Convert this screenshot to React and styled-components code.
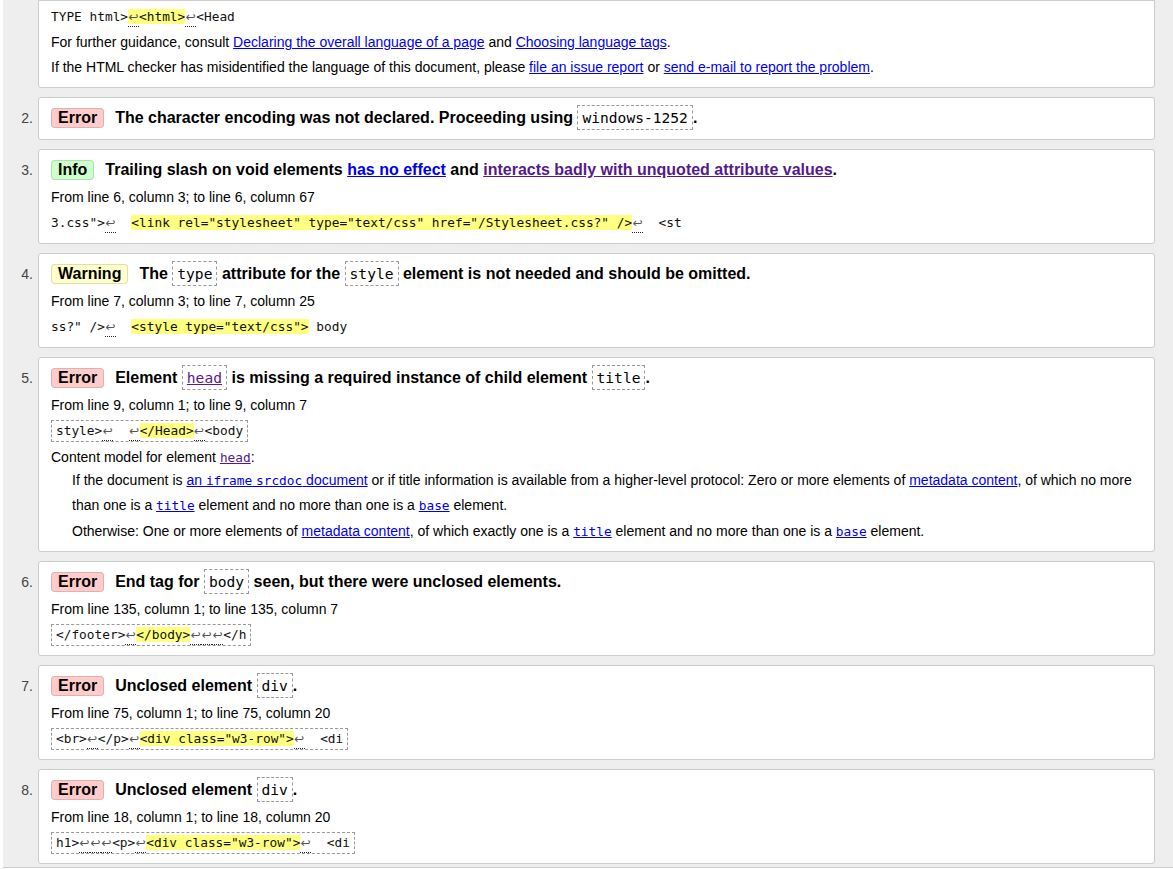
import React from 'react';
import styled, { createGlobalStyle, css } from 'styled-components';

const Global = createGlobalStyle`
  html, body { margin: 0; padding: 0; background: #fff; }
  body { font-family: "Liberation Sans", Arial, sans-serif; color: #000; }
  #root { min-height: 869px; }
`;

const Page = styled.main`
  margin-left: 3px;
  background: #eee;
  padding: 0 18px 3px 0;
  border-bottom: 1px solid #ccc;
`;

const List = styled.ol`
  list-style: none;
  margin: 0;
  padding: 0;
  display: flex;
  flex-direction: column;
  gap: 9px;
`;

const Item = styled.li`
  display: grid;
  grid-template-columns: 35px 1fr;
`;

const Marker = styled.span`
  text-align: right;
  padding: 9px 5px 0 0;
  font-size: 14px;
  line-height: 24px;
  color: #444;
`;

const Card = styled.div`
  background: #fff;
  border: 1px solid #ccc;
  border-radius: 3px;
  padding: 8px 12px ${(p) => (p.$tight ? '7px' : '9px')};
  min-width: 0;
  ${(p) =>
    p.$continued &&
    css`
      padding-top: 5px;
      border-top-left-radius: 0;
      border-top-right-radius: 0;
    `}
`;

const Headline = styled.p`
  margin: 0;
  font-size: 16px;
  font-weight: bold;
  line-height: 24px;
`;

const badgeColors = {
  error: '#ffcccc',
  info: '#ccffcc',
  warning: '#ffffcc',
};

const Badge = styled.span`
  display: inline-block;
  padding: 0 6px;
  margin-right: 11px;
  border: 1px solid rgba(0, 0, 0, 0.13);
  border-radius: 4px;
  line-height: 18px;
  background: ${(p) => badgeColors[p.$kind]};
`;

const Code = styled.code`
  font-family: "DejaVu Sans Mono", "Liberation Mono", monospace;
  font-weight: normal;
  font-size: 14.6px;
  line-height: 1;
  border: 1px dashed #999;
  padding: 3px 4px;
`;

const Mono = styled.code`
  font-family: "DejaVu Sans Mono", "Liberation Mono", monospace;
  font-size: 12.8px;
  line-height: 1;
`;

const Link = styled.a`
  color: ${(p) => (p.$visited ? '#551a8b' : '#0000ee')};
  text-decoration: underline;
`;

const Detail = styled.p`
  margin: ${(p) => (p.$gap ?? 4)}px 0 0;
  font-size: 14px;
  line-height: ${(p) => p.$lh ?? 22}px;
`;

const Extract = styled.p`
  margin: ${(p) => (p.$first ? 0 : 4)}px 0 0;
  font-family: "DejaVu Sans Mono", "Liberation Mono", monospace;
  font-size: 12.8px;
  line-height: 22px;
  white-space: pre;
  color: #111;
  ${(p) =>
    p.$boxed &&
    css`
      width: fit-content;
      line-height: 20px;
      border: 1px dashed #999;
      padding: 0 4px;
    `}
`;

const Mark = styled.mark`
  background: #ffff80;
  color: inherit;
`;

const LfGlyph = styled.span`
  display: inline-block;
  width: 11px;
  text-align: center;
  font-family: "DejaVu Sans", sans-serif;
  font-size: 12px;
  line-height: 14px;
  color: #555;
  border-bottom: 1px dotted #222;
  padding-bottom: 2px;
`;

const Lf = () => <LfGlyph title="Line break">↩</LfGlyph>;

const Model = styled.div`
  margin: 0 0 0 21px;
`;

const ModelPara = styled.p`
  margin: ${(p) => (p.$gap ?? 0)}px 0 0;
  font-size: 14px;
  line-height: 25px;
`;

const Message = ({ n, continued, tight, children }) => (
  <Item>
    <Marker>{n ? `${n}.` : ''}</Marker>
    <Card $continued={continued} $tight={tight}>
      {children}
    </Card>
  </Item>
);

export default function App() {
  return (
    <>
      <Global />
      <Page>
        <List>
          <Message continued>
            <Extract $first>
              {'TYPE html>'}
              <Mark>
                <Lf />
                {'<html>'}
              </Mark>
              <Lf />
              {'<Head'}
            </Extract>
            <Detail $gap={3}>
              For further guidance, consult{' '}
              <Link href="#">Declaring the overall language of a page</Link> and{' '}
              <Link href="#">Choosing language tags</Link>.
            </Detail>
            <Detail $gap={3}>
              If the HTML checker has misidentified the language of this document, please{' '}
              <Link href="#">file an issue report</Link> or{' '}
              <Link href="#">send e-mail to report the problem</Link>.
            </Detail>
          </Message>

          <Message n={2}>
            <Headline>
              <Badge $kind="error">Error</Badge>
              The character encoding was not declared. Proceeding using <Code>windows-1252</Code>.
            </Headline>
          </Message>

          <Message n={3}>
            <Headline>
              <Badge $kind="info">Info</Badge>
              Trailing slash on void elements <Link href="#">has no effect</Link> and{' '}
              <Link href="#" $visited>
                interacts badly with unquoted attribute values
              </Link>
              .
            </Headline>
            <Detail>From line 6, column 3; to line 6, column 67</Detail>
            <Extract>
              {'3.css">'}
              <Lf />
              {'  '}
              <Mark>{'<link rel="stylesheet" type="text/css" href="/Stylesheet.css?" />'}</Mark>
              <Lf />
              {'  <st'}
            </Extract>
          </Message>

          <Message n={4}>
            <Headline>
              <Badge $kind="warning">Warning</Badge>
              The <Code>type</Code> attribute for the <Code>style</Code> element is not needed and
              should be omitted.
            </Headline>
            <Detail>From line 7, column 3; to line 7, column 25</Detail>
            <Extract>
              {'ss?" />'}
              <Lf />
              {'  '}
              <Mark>{'<style type="text/css">'}</Mark>
              {' body'}
            </Extract>
          </Message>

          <Message n={5} tight>
            <Headline>
              <Badge $kind="error">Error</Badge>
              Element{' '}
              <Code>
                <Link href="#" $visited>
                  head
                </Link>
              </Code>{' '}
              is missing a required instance of child element <Code>title</Code>.
            </Headline>
            <Detail>From line 9, column 1; to line 9, column 7</Detail>
            <Extract $boxed>
              {'style>'}
              <Lf />
              {'  '}
              <Lf />
              <Mark>{'</Head>'}</Mark>
              <Lf />
              {'<body'}
            </Extract>
            <Detail>
              Content model for element{' '}
              <Link href="#" $visited>
                <Mono>head</Mono>
              </Link>
              :
            </Detail>
            <Model>
              <ModelPara>
                If the document is{' '}
                <Link href="#">
                  an <Mono>iframe</Mono> <Mono>srcdoc</Mono> document
                </Link>{' '}
                or if title information is available from a higher-level protocol: Zero or more
                elements of <Link href="#">metadata content</Link>, of which no more than one is a{' '}
                <Link href="#">
                  <Mono>title</Mono>
                </Link>{' '}
                element and no more than one is a{' '}
                <Link href="#">
                  <Mono>base</Mono>
                </Link>{' '}
                element.
              </ModelPara>
              <ModelPara $gap={1}>
                Otherwise: One or more elements of <Link href="#">metadata content</Link>, of which
                exactly one is a{' '}
                <Link href="#">
                  <Mono>title</Mono>
                </Link>{' '}
                element and no more than one is a{' '}
                <Link href="#">
                  <Mono>base</Mono>
                </Link>{' '}
                element.
              </ModelPara>
            </Model>
          </Message>

          <Message n={6}>
            <Headline>
              <Badge $kind="error">Error</Badge>
              End tag for <Code>body</Code> seen, but there were unclosed elements.
            </Headline>
            <Detail>From line 135, column 1; to line 135, column 7</Detail>
            <Extract $boxed>
              {'</footer>'}
              <Lf />
              <Mark>{'</body>'}</Mark>
              <Lf />
              <Lf />
              <Lf />
              {'</h'}
            </Extract>
          </Message>

          <Message n={7}>
            <Headline>
              <Badge $kind="error">Error</Badge>
              Unclosed element <Code>div</Code>.
            </Headline>
            <Detail>From line 75, column 1; to line 75, column 20</Detail>
            <Extract $boxed>
              {'<br>'}
              <Lf />
              {'</p>'}
              <Lf />
              <Mark>{'<div class="w3-row">'}</Mark>
              <Lf />
              {'  <di'}
            </Extract>
          </Message>

          <Message n={8}>
            <Headline>
              <Badge $kind="error">Error</Badge>
              Unclosed element <Code>div</Code>.
            </Headline>
            <Detail>From line 18, column 1; to line 18, column 20</Detail>
            <Extract $boxed>
              {'h1>'}
              <Lf />
              <Lf />
              <Lf />
              {'<p>'}
              <Lf />
              <Mark>{'<div class="w3-row">'}</Mark>
              <Lf />
              {'  <di'}
            </Extract>
          </Message>
        </List>
      </Page>
    </>
  );
}
